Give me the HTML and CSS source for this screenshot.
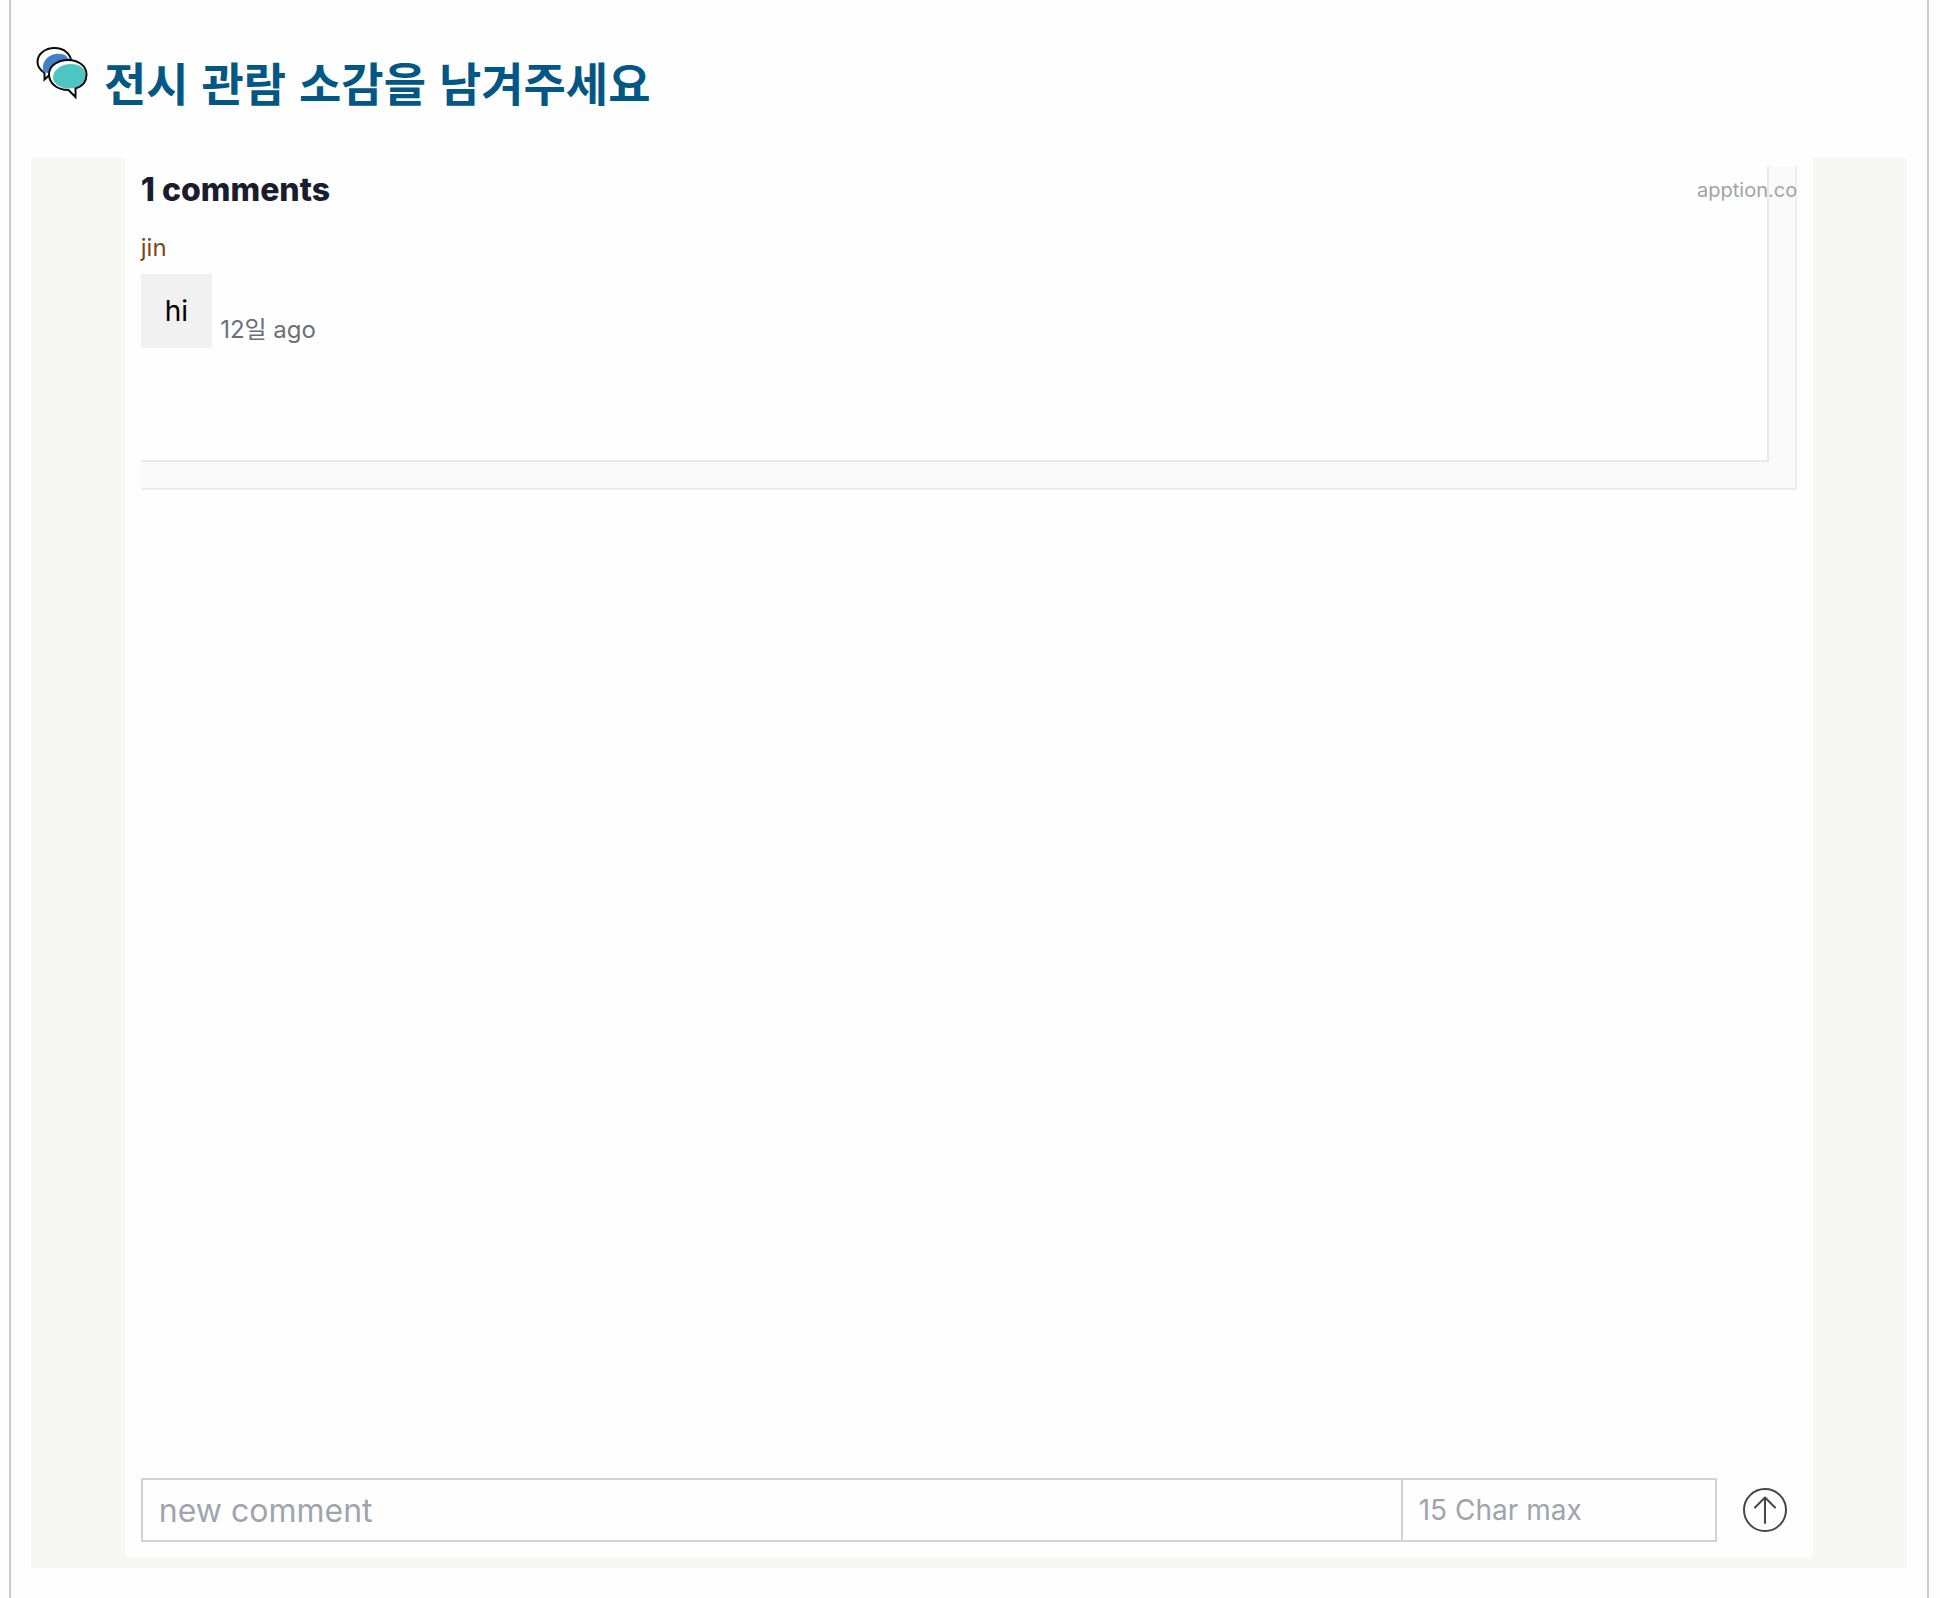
FILE: index.html
```html
<!DOCTYPE html>
<html lang="ko">
<head>
<meta charset="utf-8">
<meta name="viewport" content="width=device-width, initial-scale=1">
<title>전시 관람 소감을 남겨주세요</title>
<link rel="stylesheet" href="styles.css">
</head>
<body>
<main class="page">
  <h1 class="title">
    <svg class="title-icon" viewBox="0 0 54 54" aria-hidden="true">
      <path d="M18.500 2C28 2 35 8 35 15.500S28 30 18.500 30C16.500 30 15 29.500 13.500 29L8.500 33.500 8.500 27C4 24 1.500 20 1.500 16 1.500 8 9 2 18.500 2Z" fill="#fff" stroke="#0a0a0a" stroke-width="2"/>
      <path d="M7.500 26C4 14 16 4 29 9L34 14 20 29Z" fill="#457fc6"/>
      <path d="M32 14C42.500 14 50.500 20 50.500 28.500 50.500 35.500 46 40.500 39.500 42.500L39.500 51 32.500 44C21 44 13 37 13 28.500 13 20 21.500 14 32 14Z" fill="#fff"/>
      <path d="M35 18C43.500 18 49.500 22 49.500 29 49.500 36.500 43 42.500 33 42.500 23.500 42.500 17 37.500 17 31.500 17 24 25 18 35 18Z" fill="#4cc5c3"/>
      <path d="M32 14C42.500 14 50.500 20 50.500 28.500 50.500 35.500 46 40.500 39.500 42.500L39.500 51 32.500 44C21 44 13 37 13 28.500 13 20 21.500 14 32 14Z" fill="none" stroke="#0a0a0a" stroke-width="2"/>
    </svg>
    <span>전시 관람 소감을 남겨주세요</span>
  </h1>

  <section class="embed">
    <div class="widget">
      <div class="thread">
        <div class="frame"><div class="frame-inner"></div></div>
        <div class="comments">
          <header class="comments-head">
            <h2 class="count">1 comments</h2>
            <a class="brand" href="#">apption.co</a>
          </header>
          <article class="comment">
            <div class="author">jin</div>
            <div class="message">
              <p class="bubble">hi</p>
              <time class="when">12일 ago</time>
            </div>
          </article>
        </div>
      </div>

      <form class="composer">
        <div class="fields">
          <input class="field field-comment" type="text" placeholder="new comment" aria-label="new comment">
          <input class="field field-name" type="text" maxlength="15" placeholder="15 Char max" aria-label="name">
        </div>
        <button class="send" type="button" aria-label="send">
          <svg viewBox="0 0 44 44" aria-hidden="true">
            <circle cx="22" cy="22" r="21"/>
            <path d="M22 35V10M12 19.500 22 9.500 32 19.500"/>
          </svg>
        </button>
      </form>
    </div>
  </section>
</main>
</body>
</html>
```
FILE: styles.css
```css
* {
  box-sizing: border-box;
}

body {
  margin: 0;
  background: #fefefe;
  font-family: Inter, "Noto Sans CJK KR", sans-serif;
}

h1, h2, p {
  margin: 0;
}

.page {
  display: flex;
  flex-direction: column;
  min-height: 100vh;
  margin: 0 11px 0 9px;
  padding: 46px 20px 30px;
  border: solid #c9c9c9;
  border-width: 0 2px;
}

.title {
  display: flex;
  align-items: flex-start;
  gap: 14px;
  height: 112px;
  padding-left: 5px;
  color: #035784;
  font: bold 46px/70px "Noto Sans CJK KR", sans-serif;
}

.title-icon {
  flex: none;
  width: 54px;
  height: 54px;
}

.embed {
  display: flex;
  flex: 1;
  padding: 0 5% 10px;
  background: #f7f7f5;
}

.widget {
  display: flex;
  flex: 1;
  flex-direction: column;
  justify-content: space-between;
  padding: 8px 16px 16px;
  border-radius: 3px;
  background: #fefefe;
}

/* The comment list and its frame share one grid cell. */
.thread {
  display: grid;
}

.frame,
.comments {
  grid-area: 1 / 1;
}

.frame {
  display: grid;
  padding: 0 26px 26px 0;
  border: solid #ececec;
  border-width: 0 2px 2px 0;
  background: #fafafa;
}

.frame-inner {
  border: solid #e9e9e9;
  border-width: 0 2px 2px 0;
  background: #fefefe;
}

.comments {
  position: relative;
  padding-bottom: 142px;
}

.comments-head {
  display: flex;
  align-items: center;
  justify-content: space-between;
  height: 48px;
}

.count {
  color: #1a1d2e;
  font-size: 32px;
  font-weight: 800;
  line-height: 48px;
}

.brand {
  color: #a0a3aa;
  font-size: 20px;
  line-height: 28px;
  text-decoration: none;
}

.comment {
  margin-top: 16px;
}

.author {
  margin-bottom: 8px;
  color: #7b4a12;
  font-size: 24px;
  line-height: 36px;
}

.message {
  display: flex;
  align-items: flex-end;
  gap: 8px;
}

.bubble {
  padding: 16px 24px;
  background: #f1f1f1;
  color: #000;
  font-size: 28px;
  line-height: 42px;
}

.when {
  color: #6b6f7b;
  font-size: 24px;
  line-height: 36px;
}

.composer {
  display: flex;
  align-items: center;
  gap: 26px;
  padding-right: 10px;
}

.fields {
  display: flex;
  flex: 1;
  height: 64px;
  border: 2px solid #d1d3d6;
}

.field {
  min-width: 0;
  padding: 0 16px;
  border: 0;
  border-radius: 0;
  outline: 0;
  background: transparent;
  color: #1a1d2e;
  font-family: inherit;
}

.field::placeholder {
  color: #a0a4ae;
  opacity: 1;
}

.field-comment {
  flex: 1;
  font-size: 32px;
}

.field-name {
  flex: 0 0 20%;
  border-left: 2px solid #d1d3d6;
  font-size: 28px;
}

.send {
  flex: none;
  width: 44px;
  height: 44px;
  padding: 0;
  border: 0;
  background: none;
  cursor: pointer;
}

.send svg {
  display: block;
  fill: none;
  stroke: #454545;
  stroke-width: 2;
  stroke-linecap: round;
  stroke-linejoin: round;
}
```
